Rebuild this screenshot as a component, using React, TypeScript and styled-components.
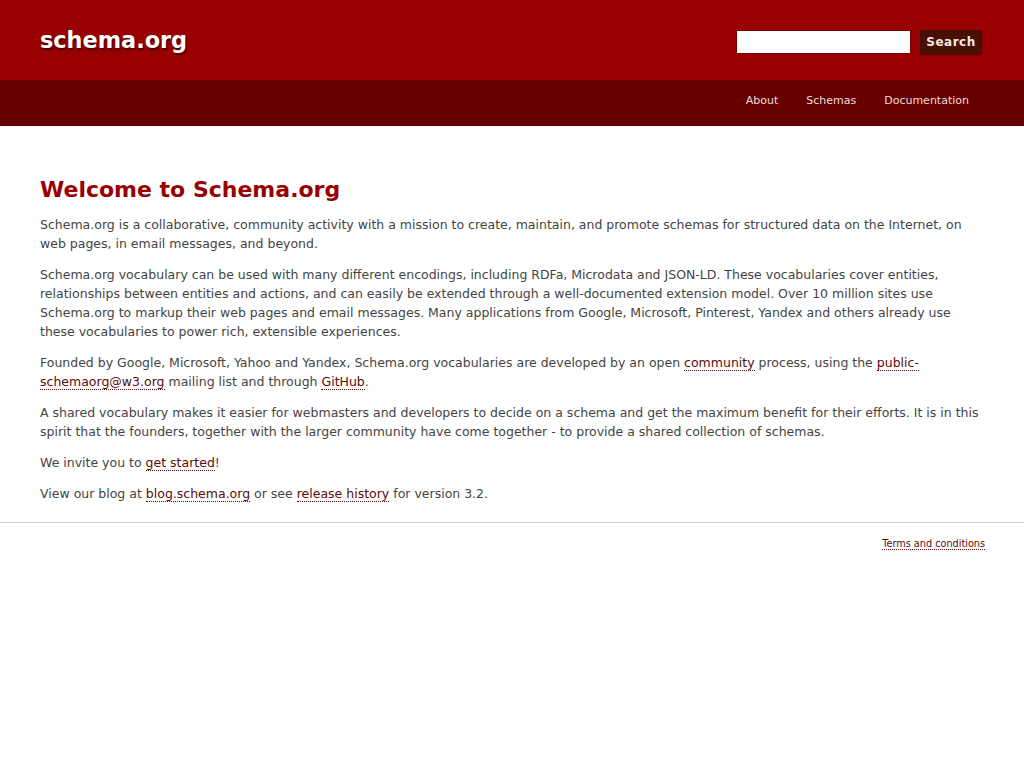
import React from "react";
import styled, { createGlobalStyle } from "styled-components";

const Global = createGlobalStyle`
  html, body { margin: 0; padding: 0; background: #fff; }
  body { font-family: "DejaVu Sans", Verdana, sans-serif; font-size: 12.5px; color: #444; }
`;

const Header = styled.header`
  background: #990000;
  height: 80px;
  padding: 0 42px 0 40px;
  display: flex;
  align-items: center;
  justify-content: space-between;
`;

const Logo = styled.a`
  color: #fff;
  font-weight: bold;
  font-size: 22.4px;
  text-decoration: none;
  text-shadow: 1px 2px 2px rgba(0, 0, 0, 0.55);
`;

const SearchForm = styled.form`
  display: flex;
  gap: 9px;
  align-items: center;
  margin-top: 4px;
`;

const SearchInput = styled.input`
  width: 171px;
  height: 20px;
  border: 1px solid #700;
  padding: 1px;
  background: #fff;
`;

const SearchButton = styled.button`
  height: 24px;
  width: 62px;
  border: none;
  background: #461104;
  color: #f3e9e6;
  font-family: "DejaVu Sans", Verdana, sans-serif;
  font-weight: bold;
  font-size: 12px;
  letter-spacing: 0.5px;
  box-shadow: 0 1px 1px rgba(0,0,0,0.3);
`;

const Nav = styled.nav`
  background: #660000;
  height: 46px;
  display: flex;
  justify-content: flex-end;
  align-items: center;
  padding-right: 55px;
  padding-bottom: 6px;
  box-sizing: border-box;
`;

const NavLink = styled.a<{ $gap: number }>`
  color: #f0dcdc;
  font-size: 11px;
  text-decoration: none;
  padding-left: ${(p) => p.$gap}px;
`;

const Main = styled.main`
  padding: 50px 40px 7px 40px;
`;

const Title = styled.h1`
  color: #990000;
  font-size: 22px;
  font-weight: bold;
  margin: 0 0 11px;
  line-height: 28px;
`;

const P = styled.p`
  margin: 0 0 12px;
  line-height: 19px;
`;

const Link = styled.a`
  color: #5a0a0a;
  text-decoration: none;
  border-bottom: 1px dotted #5a0a0a;
`;

const Footer = styled.footer`
  border-top: 1px solid #ccc;
  padding: 15px 39px 0 40px;
  display: flex;
  justify-content: flex-end;
`;

const FooterLink = styled.a`
  color: #5a0a0a;
  font-size: 9.7px;
  text-decoration: none;
  border-bottom: 1px dotted #5a0a0a;
`;

export default function App() {
  return (
    <>
      <Global />
      <Header>
        <Logo href="#">schema.org</Logo>
        <SearchForm onSubmit={(e) => e.preventDefault()}>
          <SearchInput type="text" />
          <SearchButton type="submit">Search</SearchButton>
        </SearchForm>
      </Header>
      <Nav>
        <NavLink href="#" $gap={0}>About</NavLink>
        <NavLink href="#" $gap={28}>Schemas</NavLink>
        <NavLink href="#" $gap={28}>Documentation</NavLink>
      </Nav>
      <Main>
        <Title>Welcome to Schema.org</Title>
        <P>
          Schema.org is a collaborative, community activity with a mission to create, maintain, and promote schemas for structured data on the Internet, on web pages, in email messages, and beyond.
        </P>
        <P>
          Schema.org vocabulary can be used with many different encodings, including RDFa, Microdata and JSON-LD. These vocabularies cover entities, relationships between entities and actions, and can easily be extended through a well-documented extension model. Over 10 million sites use Schema.org to markup their web pages and email messages. Many applications from Google, Microsoft, Pinterest, Yandex and others already use these vocabularies to power rich, extensible experiences.
        </P>
        <P>
          Founded by Google, Microsoft, Yahoo and Yandex, Schema.org vocabularies are developed by an open <Link href="#">community</Link> process, using the <Link href="#">public-schemaorg@w3.org</Link> mailing list and through <Link href="#">GitHub</Link>.
        </P>
        <P>
          A shared vocabulary makes it easier for webmasters and developers to decide on a schema and get the maximum benefit for their efforts. It is in this spirit that the founders, together with the larger community have come together - to provide a shared collection of schemas.
        </P>
        <P>
          We invite you to <Link href="#">get started</Link>!
        </P>
        <P>
          View our blog at <Link href="#">blog.schema.org</Link> or see <Link href="#">release history</Link> for version 3.2.
        </P>
      </Main>
      <Footer>
        <FooterLink href="#">Terms and conditions</FooterLink>
      </Footer>
    </>
  );
}
